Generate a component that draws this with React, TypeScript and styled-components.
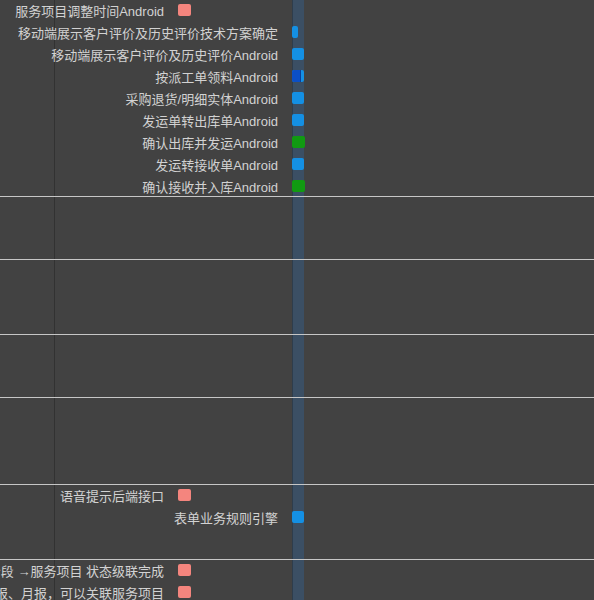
import React from 'react';
import styled, { createGlobalStyle } from 'styled-components';

const Global = createGlobalStyle`
  html, body { margin: 0; padding: 0; background: #424242; overflow: hidden; }
  body { font-family: "Liberation Sans", "Noto Sans CJK SC", sans-serif; }
`;

const Chart = styled.div`
  position: relative;
  width: 594px;
  height: 600px;
  overflow: hidden;
  background: #424242;
`;

const Divider = styled.div`
  position: absolute;
  left: 54px;
  top: 0;
  bottom: 0;
  width: 1px;
  background: #323232;
`;

const Today = styled.div`
  position: absolute;
  left: 292px;
  top: 0;
  bottom: 0;
  width: 11px;
  background: #3b4f64;
  border-left: 1px solid #2e3d4c;
`;

const Layer = styled.div`
  position: relative;
  z-index: 1;
  display: flex;
  flex-direction: column;
`;

const Group = styled.section<{ $h: number; $last?: boolean }>`
  flex: none;
  height: ${p => p.$h}px;
  box-sizing: border-box;
  border-bottom: ${p => (p.$last ? 'none' : '1px solid #c6c6c6')};
  display: flex;
  flex-direction: column;
`;

const Row = styled.div`
  flex: none;
  height: 22px;
  box-sizing: border-box;
  padding-bottom: 2px;
  display: flex;
  align-items: center;
`;

const Label = styled.div`
  flex: none;
  display: flex;
  justify-content: flex-end;
  box-sizing: border-box;
  padding-right: 14px;
  font-size: 13px;
  color: #d2d2d2;
  white-space: nowrap;
`;

const Bar = styled.div<{ $color: string }>`
  flex: none;
  height: 12px;
  border-radius: 2px;
  background: ${p => p.$color};
  display: flex;
  overflow: hidden;
`;

const Done = styled.div`
  height: 100%;
  background: #0b4fc6;
  border-right: 1px solid #0a3f9a;
`;

const PINK = '#f4857e';
const BLUE = '#1490e4';
const GREEN = '#119a12';

type Task = { name: string; x: number; w: number; color: string; done?: number };

const groups: { h: number; tasks: Task[] }[] = [
  {
    h: 197,
    tasks: [
      { name: '服务项目调整时间Android', x: 178, w: 13, color: PINK },
      { name: '移动端展示客户评价及历史评价技术方案确定', x: 292, w: 6, color: BLUE },
      { name: '移动端展示客户评价及历史评价Android', x: 292, w: 12, color: BLUE },
      { name: '按派工单领料Android', x: 292, w: 12, color: BLUE, done: 8 },
      { name: '采购退货/明细实体Android', x: 292, w: 12, color: BLUE },
      { name: '发运单转出库单Android', x: 292, w: 12, color: BLUE },
      { name: '确认出库并发运Android', x: 292, w: 13, color: GREEN },
      { name: '发运转接收单Android', x: 292, w: 12, color: BLUE },
      { name: '确认接收并入库Android', x: 292, w: 13, color: GREEN },
    ],
  },
  { h: 63, tasks: [] },
  { h: 75, tasks: [] },
  { h: 63, tasks: [] },
  { h: 87, tasks: [] },
  {
    h: 75,
    tasks: [
      { name: '语音提示后端接口', x: 178, w: 13, color: PINK },
      { name: '表单业务规则引擎', x: 292, w: 12, color: BLUE },
    ],
  },
  {
    h: 60,
    tasks: [
      { name: '工单阶段 →服务项目 状态级联完成', x: 178, w: 13, color: PINK },
      { name: '日报、周报、月报，可以关联服务项目', x: 178, w: 13, color: PINK },
    ],
  },
];

export default function App() {
  return (
    <>
      <Global />
      <Chart>
        <Divider />
        <Today />
        <Layer>
          {groups.map((g, gi) => (
            <Group key={gi} $h={g.h} $last={gi === groups.length - 1}>
              {g.tasks.map((t, ti) => (
                <Row key={ti}>
                  <Label style={{ width: t.x }}>
                    <span>{t.name}</span>
                  </Label>
                  <Bar $color={t.color} style={{ width: t.w }}>
                    {t.done ? <Done style={{ width: t.done }} /> : null}
                  </Bar>
                </Row>
              ))}
            </Group>
          ))}
        </Layer>
      </Chart>
    </>
  );
}
